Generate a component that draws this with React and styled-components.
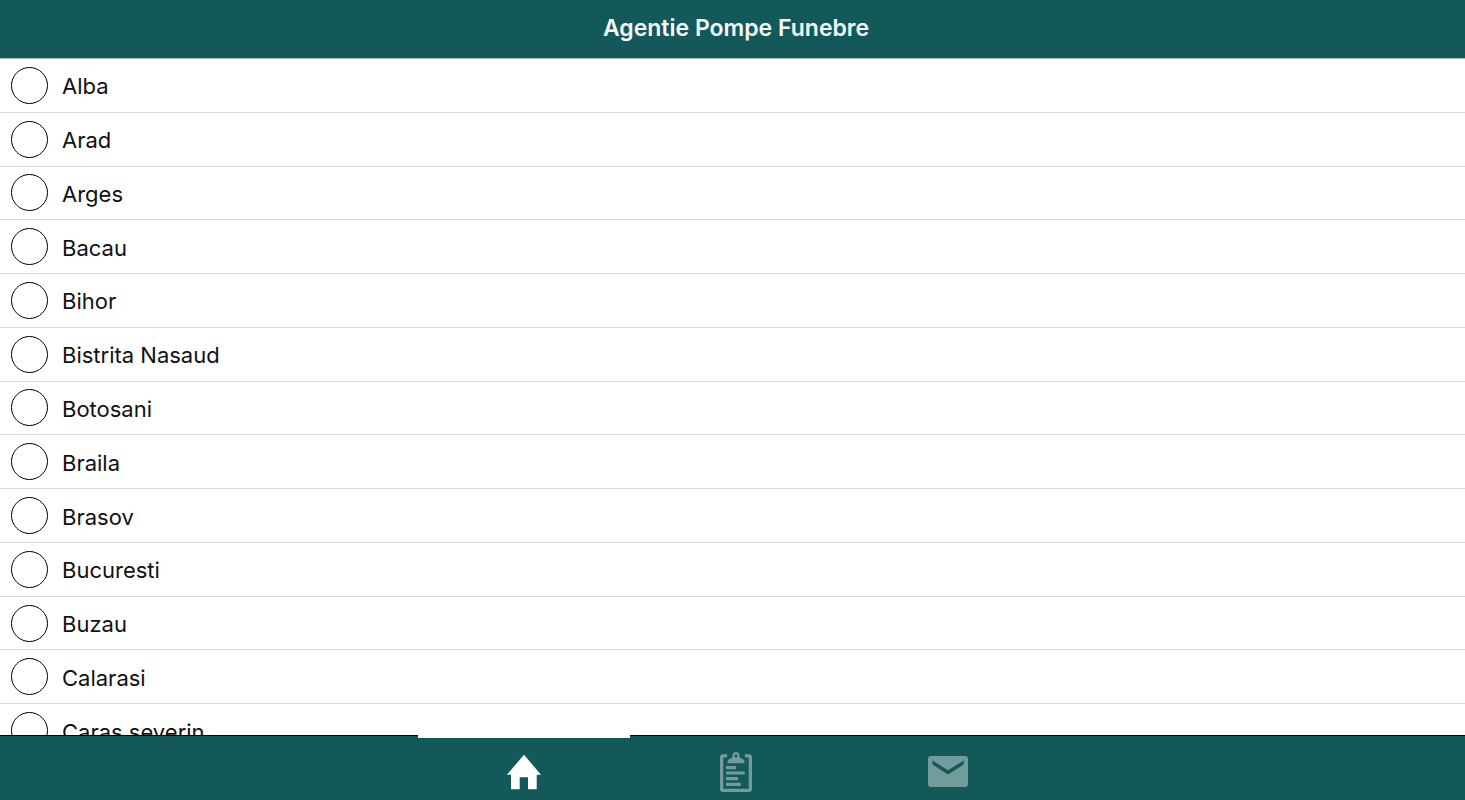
import { useState } from "react"
import styled, { createGlobalStyle } from "styled-components"

const GlobalStyle = createGlobalStyle`
    * {
        box-sizing: border-box;
    }
    body {
        margin: 0;
        background: #fff;
        font-family: Inter, "Liberation Sans", Arial, sans-serif;
    }
`
const Screen = styled.div`
    display: flex;
    flex-direction: column;
    height: 100vh;
`
const Header = styled.header`
    display: flex;
    flex: none;
    align-items: center;
    justify-content: center;
    height: 59px;
    padding: 0 0 2px 7px;
    background: #145959;
    border-bottom: 1px solid #b4bcbc;
`
const Title = styled.h1`
    margin: 0;
    color: #f4f8f8;
    font-size: 23px;
    font-weight: 600;
    line-height: 30px;
`
const Content = styled.main`
    flex: 1;
    min-height: 0;
    overflow-y: auto;
    scrollbar-width: none;
`
const CountyList = styled.ul`
    display: grid;
    grid-auto-rows: 1fr;
    min-height: 699px;
    margin: 0;
    padding: 0;
    list-style: none;
`
const CountyItem = styled.li`
    display: flex;
    border-bottom: 1px solid #dcdcdc;
`
const CountyLabel = styled.label`
    display: flex;
    flex: 1;
    align-items: center;
    gap: 14px;
    padding: 0 11px;
    cursor: pointer;
`
const Radio = styled.input`
    appearance: none;
    flex: none;
    width: 37px;
    height: 37px;
    margin: 0;
    border: 1px solid #000;
    border-radius: 50%;
    &:checked {
        background: #145959;
    }
`
const CountyName = styled.span`
    padding-top: 2px;
    color: #111;
    font-size: 22px;
    line-height: 26px;
`
const TabBar = styled.nav`
    display: flex;
    flex: none;
    justify-content: center;
    height: 65px;
    padding-left: 7px;
    background: #145959;
    border-top: 1px solid #000;
`
const Tab = styled.button`
    position: relative;
    display: flex;
    flex: 0 1 212px;
    align-items: center;
    justify-content: center;
    padding: 8px 0 0;
    border: 0;
    background: none;
    color: ${(props) => (props.$active ? "#fff" : "#729b9b")};
    cursor: pointer;
    &::before {
        content: "";
        position: absolute;
        top: -1px;
        left: 0;
        width: 100%;
        height: 3px;
        background: ${(props) => (props.$active ? "#fff" : "none")};
    }
`
const Icon = styled.svg`
    width: 40px;
    height: 40px;
    fill: currentColor;
`

const HomeIcon = () => (
    <Icon viewBox="0 0 40 40" aria-hidden="true">
        <path d="M20 2.800 3 22.700h4v14.600h8.700v-12H24v12h8.700V22.700H37z" />
    </Icon>
)
const ClipboardIcon = () => (
    <Icon viewBox="0 0 40 40" aria-hidden="true">
        <path d="M11 2.300H7a3 3 0 0 0-3 3V37a3 3 0 0 0 3 3h26a3 3 0 0 0 3-3V5.300a3 3 0 0 0-3-3h-4v3.200h3.700v31.200H7.300V5.500H11z" />
        <path
            fillRule="evenodd"
            d="M11.500 11.300V10c0-2.500 2-3 4-4 .8-.5 1-1.500 1-2.500a3.500 3.500 0 0 1 7 0c0 1 .2 2 1 2.500 2 1 4 1.500 4 4v1.300zM20 2.500a1.400 1.400 0 1 0 0 2.800 1.400 1.400 0 0 0 0-2.800z"
        />
        <path d="M10 14h10v3.200H10zM10 19.400h18.700v3.200H10zM10 25h12v3.200H10zM10 30.700h14.700v3.200H10z" />
    </Icon>
)
const MailIcon = () => (
    <Icon viewBox="0 0 40 40" aria-hidden="true">
        <path
            fillRule="evenodd"
            d="M3 4h34a3 3 0 0 1 3 3v25a3 3 0 0 1-3 3H3a3 3 0 0 1-3-3V7a3 3 0 0 1 3-3zM4.500 8.500v4L20 22.500l15.700-10v-4L20 18.300z"
        />
    </Icon>
)

const counties = [
    "Alba",
    "Arad",
    "Arges",
    "Bacau",
    "Bihor",
    "Bistrita Nasaud",
    "Botosani",
    "Braila",
    "Brasov",
    "Bucuresti",
    "Buzau",
    "Calarasi",
    "Caras severin",
]
const tabs = [
    { id: "home", label: "Acasa", icon: HomeIcon },
    { id: "list", label: "Lista", icon: ClipboardIcon },
    { id: "mail", label: "Contact", icon: MailIcon },
]

const County = (props) => {
    const { name, checked, onSelect } = props
    return (
        <CountyItem>
            <CountyLabel>
                <Radio
                    type="radio"
                    name="county"
                    value={name}
                    checked={checked}
                    onChange={() => onSelect(name)}
                />
                <CountyName>{name}</CountyName>
            </CountyLabel>
        </CountyItem>
    )
}

const App = () => {
    const [county, setCounty] = useState(null)
    const [tab, setTab] = useState("home")
    return (
        <Screen>
            <GlobalStyle />
            <Header>
                <Title>Agentie Pompe Funebre</Title>
            </Header>
            <Content>
                <CountyList>
                    {counties.map((name) => (
                        <County key={name} name={name} checked={county === name} onSelect={setCounty} />
                    ))}
                </CountyList>
            </Content>
            <TabBar>
                {tabs.map(({ id, label, icon: TabIcon }) => (
                    <Tab key={id} type="button" aria-label={label} $active={tab === id} onClick={() => setTab(id)}>
                        <TabIcon />
                    </Tab>
                ))}
            </TabBar>
        </Screen>
    )
}
export default App
